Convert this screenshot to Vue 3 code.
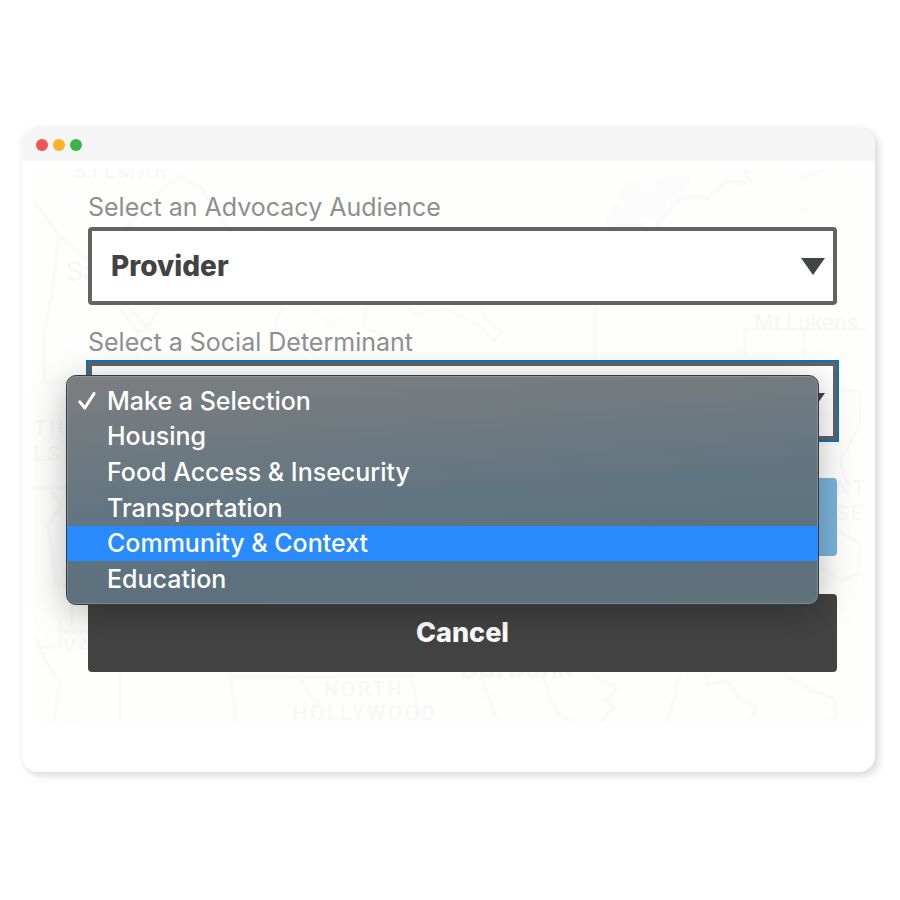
<script setup>
import { ref } from 'vue'

const audiences = ['Provider']
const determinants = [
  'Make a Selection',
  'Housing',
  'Food Access & Insecurity',
  'Transportation',
  'Community & Context',
  'Education',
]

const audience = ref('Provider')
const determinant = ref('Make a Selection')
const highlighted = ref('Community & Context')
const open = ref(true)

function choose(option) {
  determinant.value = option
  open.value = false
}
</script>

<template>
  <main class="page">
    <section class="window">
      <header class="titlebar">
        <span class="dot red"></span>
        <span class="dot amber"></span>
        <span class="dot green"></span>
      </header>

      <div class="body">
        <svg class="map" viewBox="33 168 835 554" preserveAspectRatio="xMidYMid slice" aria-hidden="true">
          <g class="land">
            <path d="M616 195l12-14 22 4 12-8 22 3-3 12-14 6 2 16-12 10-8-8-14 4zM603 225l10-22 20 6 14 18zM662 190l10-12 20-2-8 18-14 10zM800 172l26-4-10 10-14 4zM800 208l14-4 4 6-16 4zM322 318l20-4 2 12-18 2zM312 308l8 0 0 6-8 0z" />
          </g>
          <g class="roads">
            <path d="M33 200l26 34 34 30 60 70" />
            <path d="M59 234l-7 60-8 38 0 50 26 0" />
            <path d="M125 228l36-38 20-14 20 12 30 44" />
            <path d="M119 306l17 24 10 0 14-24M138 330l0 30" />
            <path d="M656 226l25-29 28 0 17-16 25 2-6-14" />
            <path d="M33 487l33 0M52 490l8 16-12 18 8 60 16 4 0 42" />
            <path d="M36 636l8 22 16 24-6 40M40 647l20 0 0-27M60 631l28 0" />
            <path d="M120 672l0 50M60 722l20 0" />
            <path d="M230 672l6 50M232 677l180-2 8 45M300 677l10 18 10 10" />
            <path d="M480 674l18 48M542 674l14 38 16 10M592 674l26 14-12 12 8 8-14 14" />
            <path d="M680 674l-12 48M706 674l2 10 18-4 16 20 14 6-6 16" />
            <path d="M784 674l28 16 22 8 2 16-6 8" />
          </g>
          <g class="roads thin">
            <path d="M284 306l-8 12 0 12 26 14 26 24" />
            <path d="M366 306l-2 20 20 10M408 306l6 8 30-6 34 16 16 16 8-8-16-14-6-16 60-2" />
            <path d="M595 306l0 54" />
            <path d="M745 329l122 0M745 329l0 28M804 329l0 28" />
            <path d="M840 390l20 0 0 35-20 35 6 20M838 530l22 14-2 30" />
            <path d="M822 568l20 12 22-8" />
          </g>
          <g class="places">
            <text x="74" y="177" class="wide">SYLMAR</text>
            <text x="66" y="280" class="town">San Fernando</text>
            <text x="754" y="329" class="peak">Mt Lukens</text>
            <text x="34" y="434" class="wide">THE</text>
            <text x="34" y="460" class="wide">LS</text>
            <text x="63" y="652" class="wide">VAN</text>
            <text x="836" y="494" class="wide">NT</text>
            <text x="836" y="519" class="wide">SE</text>
            <text x="324" y="695" class="wide">NORTH</text>
            <text x="293" y="719" class="wide">HOLLYWOOD</text>
            <text x="460" y="677" class="city">Burbank</text>
          </g>
        </svg>

        <form class="form" @submit.prevent>
          <div class="fields">
            <div class="field">
              <label for="audience">Select an Advocacy Audience</label>
              <div class="control">
                <select id="audience" v-model="audience">
                  <option v-for="item in audiences" :key="item">{{ item }}</option>
                </select>
                <svg class="arrow" viewBox="0 0 24 17" aria-hidden="true"><path d="M0 0h24L12 17z" /></svg>
              </div>
            </div>

            <div class="field">
              <label for="determinant">Select a Social Determinant</label>
              <div class="control">
                <select id="determinant" v-model="determinant" class="focused" @mousedown.prevent="open = !open">
                  <option v-for="item in determinants" :key="item">{{ item }}</option>
                </select>
                <svg class="arrow" viewBox="0 0 24 17" aria-hidden="true"><path d="M0 0h24L12 17z" /></svg>
                <div v-if="open" class="menu" role="listbox" aria-label="Social determinants">
                  <button
                    v-for="item in determinants"
                    :key="item"
                    type="button"
                    role="option"
                    class="option"
                    :class="{ highlighted: item === highlighted }"
                    :aria-selected="item === determinant"
                    @mouseenter="highlighted = item"
                    @click="choose(item)"
                  >
                    <span class="mark">
                      <svg v-if="item === determinant" viewBox="0 0 18 18" aria-hidden="true">
                        <path d="M1.8 9.8L6.8 16L16 1.6" />
                      </svg>
                    </span>
                    <span>{{ item }}</span>
                  </button>
                </div>
              </div>
            </div>
          </div>

          <button type="submit" class="button primary" aria-label="Submit"></button>
          <button type="button" class="button dark">Cancel</button>
        </form>
      </div>
    </section>
  </main>
</template>

<style>
body {
  background: #fff;
}
</style>

<style scoped>
.page {
  box-sizing: border-box;
  padding: 128px 25px 128px 22px;
  font-family: Inter, "Liberation Sans", sans-serif;
}

.window {
  border-radius: 16px;
  background: #fff;
  box-shadow: 0 0 8px rgba(0, 0, 0, 0.05), 4px 4px 8px rgba(0, 0, 0, 0.13);
}

.titlebar {
  display: flex;
  align-items: center;
  gap: 5px;
  height: 33px;
  padding-left: 14px;
  border-radius: 16px 16px 0 0;
  background: #f5f5f5;
}

.dot {
  width: 12px;
  height: 12px;
  border-radius: 50%;
}

.red {
  background: #f05450;
}

.amber {
  background: #fdb02a;
}

.green {
  background: #3fb34b;
}

.body {
  position: relative;
}

.map {
  position: absolute;
  top: 8px;
  left: 11px;
  width: calc(100% - 18px);
  height: calc(100% - 58px);
  background: #fefefd;
}

.land {
  fill: #fcfcfc;
}

.roads {
  fill: none;
  stroke: #fafafa;
  stroke-width: 4;
  stroke-linejoin: round;
}

.thin {
  stroke-width: 3;
}

.places {
  fill: #f7f7f7;
}

.wide {
  font-family: Roboto, sans-serif;
  font-size: 20px;
  letter-spacing: 3px;
}

.town {
  font-size: 27px;
}

.peak {
  font-size: 21px;
  font-weight: 500;
}

.city {
  font-size: 28px;
  font-weight: 600;
}

.form {
  position: relative;
  display: flex;
  flex-direction: column;
  gap: 38px;
  padding: 31px 38px 100px 66px;
}

.fields {
  display: flex;
  flex-direction: column;
  gap: 22px;
}

.field {
  display: flex;
  flex-direction: column;
  gap: 5px;
}

label {
  color: #8f8f8f;
  font-size: 25px;
  font-weight: 400;
  line-height: 30px;
}

.control {
  position: relative;
  display: flex;
}

select {
  flex: 1;
  box-sizing: border-box;
  height: 78px;
  padding: 0 48px 0 19px;
  border: 4px solid #636363;
  border-radius: 4px;
  appearance: none;
  background: #fff;
  color: #434343;
  font-family: inherit;
  font-size: 28px;
  font-weight: 800;
}

.focused {
  border-radius: 0;
  outline: 2px solid #0b75bf;
}

.arrow {
  position: absolute;
  top: 31px;
  right: 12px;
  width: 24px;
  height: 17px;
  fill: #434545;
  pointer-events: none;
}

.menu {
  position: absolute;
  z-index: 2;
  top: 13px;
  right: 18px;
  left: -22px;
  display: grid;
  grid-template-rows: repeat(6, 1fr);
  box-sizing: border-box;
  height: 230px;
  padding: 7px 0;
  border: 1px solid #363a3c;
  border-radius: 10px;
  background: linear-gradient(176deg, #7c7e80 0%, #707a80 25%, #607482 55%, #5c707d 80%, #60717b 100%);
  box-shadow: inset 0 0 0 1px rgba(255, 255, 255, 0.18), 0 8px 36px rgba(0, 0, 0, 0.28);
}

.option {
  display: flex;
  align-items: center;
  gap: 11px;
  padding: 0 11px;
  border: 0;
  background: none;
  color: #fff;
  font-family: inherit;
  font-size: 25px;
  font-weight: 500;
  text-align: left;
}

.highlighted {
  background: #298bfd;
}

.mark {
  display: flex;
  width: 18px;
}

.mark svg {
  width: 18px;
  height: 18px;
  fill: none;
  stroke: #fff;
  stroke-width: 3;
  stroke-linecap: round;
  stroke-linejoin: round;
}

.button {
  height: 78px;
  padding: 0 0 2px;
  border: 0;
  border-radius: 4px;
  color: #fff;
  font-family: inherit;
  font-size: 27px;
  font-weight: 800;
}

.primary {
  background: #7ab4db;
}

.dark {
  background: #434343;
}
</style>
